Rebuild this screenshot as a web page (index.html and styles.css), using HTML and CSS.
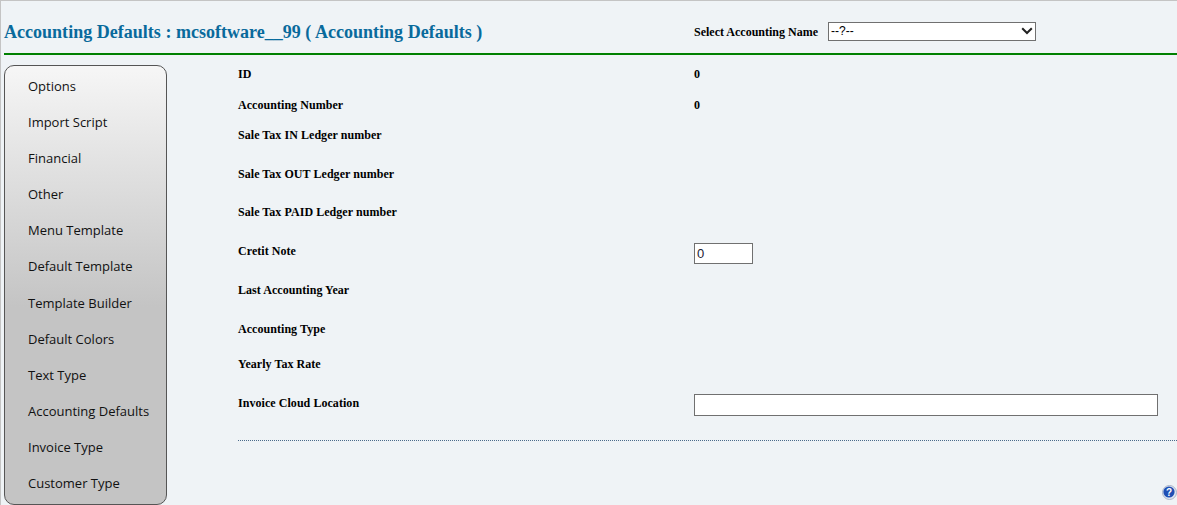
FILE: index.html
```html
<!DOCTYPE html>
<html lang="en">
<head>
  <meta charset="UTF-8" />
  <title>Accounting Defaults</title>
  <link rel="stylesheet" href="styles.css">
</head>
<body>

<div class="page">
  <div class="header">
    <h1 class="title">Accounting Defaults : mcsoftware__99 ( Accounting Defaults )</h1>
    <div class="picker">
      <label class="picker-label">Select Accounting Name</label>
      <div class="select-wrap">
        <select class="picker-select"><option>--?--</option></select>
        <svg class="chevron" width="12" height="8" viewBox="0 0 12 8"><path d="M1.2 1.2 L6 6 L10.8 1.2" fill="none" stroke="#222" stroke-width="2"/></svg>
      </div>
    </div>
  </div>

  <div class="main">
    <ul class="menu">
      <li>Options</li>
      <li>Import Script</li>
      <li>Financial</li>
      <li>Other</li>
      <li>Menu Template</li>
      <li>Default Template</li>
      <li>Template Builder</li>
      <li>Default Colors</li>
      <li>Text Type</li>
      <li>Accounting Defaults</li>
      <li>Invoice Type</li>
      <li>Customer Type</li>
    </ul>

    <div class="content">
      <div class="row h31"><span class="label">ID</span><span class="value">0</span></div>
      <div class="row h30"><span class="label">Accounting Number</span><span class="value">0</span></div>
      <div class="row h39"><span class="label">Sale Tax IN Ledger number</span></div>
      <div class="row h38"><span class="label">Sale Tax OUT Ledger number</span></div>
      <div class="row h39"><span class="label">Sale Tax PAID Ledger number</span></div>
      <div class="row h39"><span class="label">Cretit Note</span><input class="input small" type="text" value="0"></div>
      <div class="row h39"><span class="label">Last Accounting Year</span></div>
      <div class="row h35"><span class="label">Accounting Type</span></div>
      <div class="row h39"><span class="label">Yearly Tax Rate</span></div>
      <div class="row h37"><span class="label">Invoice Cloud Location</span><input class="input wide" type="text"></div>
      <div class="divider"></div>
    </div>
  </div>

  <svg class="help" width="15" height="15" viewBox="0 0 15 15">
    <circle cx="7.5" cy="7.5" r="7" fill="#dfe6f2" stroke="#a9b4c8" stroke-width="1"/>
    <circle cx="7" cy="7" r="5.6" fill="#1f4fb4"/>
    <text x="7" y="10.6" text-anchor="middle" class="help-mark">?</text>
  </svg>
</div>

</body>
</html>
```

FILE: styles.css
```css
html, body {
  margin: 0;
  padding: 0;
  height: 100%;
  overflow: hidden;
  background: #eff3f6;
}

.page {
  position: relative;
  height: 504px;
  border-top: 1px solid #c4c4c4;
  border-left: 1px solid #c4c4c4;
  padding-left: 3px;
  font-family: "Liberation Serif", serif;
  color: #000;
}

.header {
  display: flex;
  align-items: center;
  height: 52px;
  border-bottom: 2px solid #008000;
}

.title {
  width: 690px;
  margin: 10px 0 0;
  font-size: 18px;
  font-weight: bold;
  letter-spacing: 0.02px;
  color: #096a9c;
  white-space: nowrap;
}

.picker {
  display: flex;
  align-items: center;
  gap: 10px;
  margin-top: 8px;
}

.picker-label {
  position: relative;
  top: 1px;
  font-size: 12px;
  font-weight: bold;
}

.select-wrap {
  position: relative;
  display: flex;
}

.picker-select {
  width: 208px;
  height: 19px;
  padding: 0 0 0 2px;
  border: 1px solid #707070;
  border-radius: 0;
  background: #fff;
  appearance: none;
  font-family: "Liberation Sans", sans-serif;
  font-size: 12px;
}

.chevron {
  position: absolute;
  right: 3px;
  top: 5px;
  pointer-events: none;
}

.main {
  display: flex;
  margin-top: 10px;
}

.menu {
  width: 163px;
  height: 440px;
  box-sizing: border-box;
  margin: 0;
  padding: 2px 0 0 23px;
  list-style: none;
  border: 1px solid #555;
  border-radius: 10px;
  background: linear-gradient(to bottom, #f6f6f6 0, #c4c4c4 55%, #c4c4c4 100%);
  font-family: "Open Sans", sans-serif;
  font-size: 13px;
  color: #111;
}

.menu li {
  height: 36.1px;
  line-height: 36px;
  white-space: nowrap;
}

.content {
  flex: 1;
  margin-left: 71px;
  font-size: 12px;
  font-weight: bold;
}

.row {
  display: flex;
  align-items: flex-start;
}

.h30 { height: 30px; }
.h31 { height: 31px; }
.h35 { height: 35px; }
.h37 { height: 37px; }
.h38 { height: 38px; }
.h39 { height: 39px; }

.label {
  width: 456px;
  flex-shrink: 0;
  line-height: 18px;
  letter-spacing: 0.05px;
}

.value {
  line-height: 18px;
}

.input {
  box-sizing: border-box;
  padding: 0 2px;
  border: 1px solid #707070;
  background: #fff;
  font-family: "Liberation Sans", sans-serif;
  font-size: 13px;
  color: #223;
}

.input.small { width: 59px; height: 21px; margin-top: 1px; }
.input.wide { width: 464px; height: 22px; }

.divider {
  margin-top: 9px;
  border-top: 1px dotted #4a6a8a;
}

.help {
  position: absolute;
  right: 0;
  bottom: 5px;
}

.help-mark {
  font-family: "Liberation Sans", sans-serif;
  font-size: 10px;
  font-weight: bold;
  fill: #fff;
}
```
